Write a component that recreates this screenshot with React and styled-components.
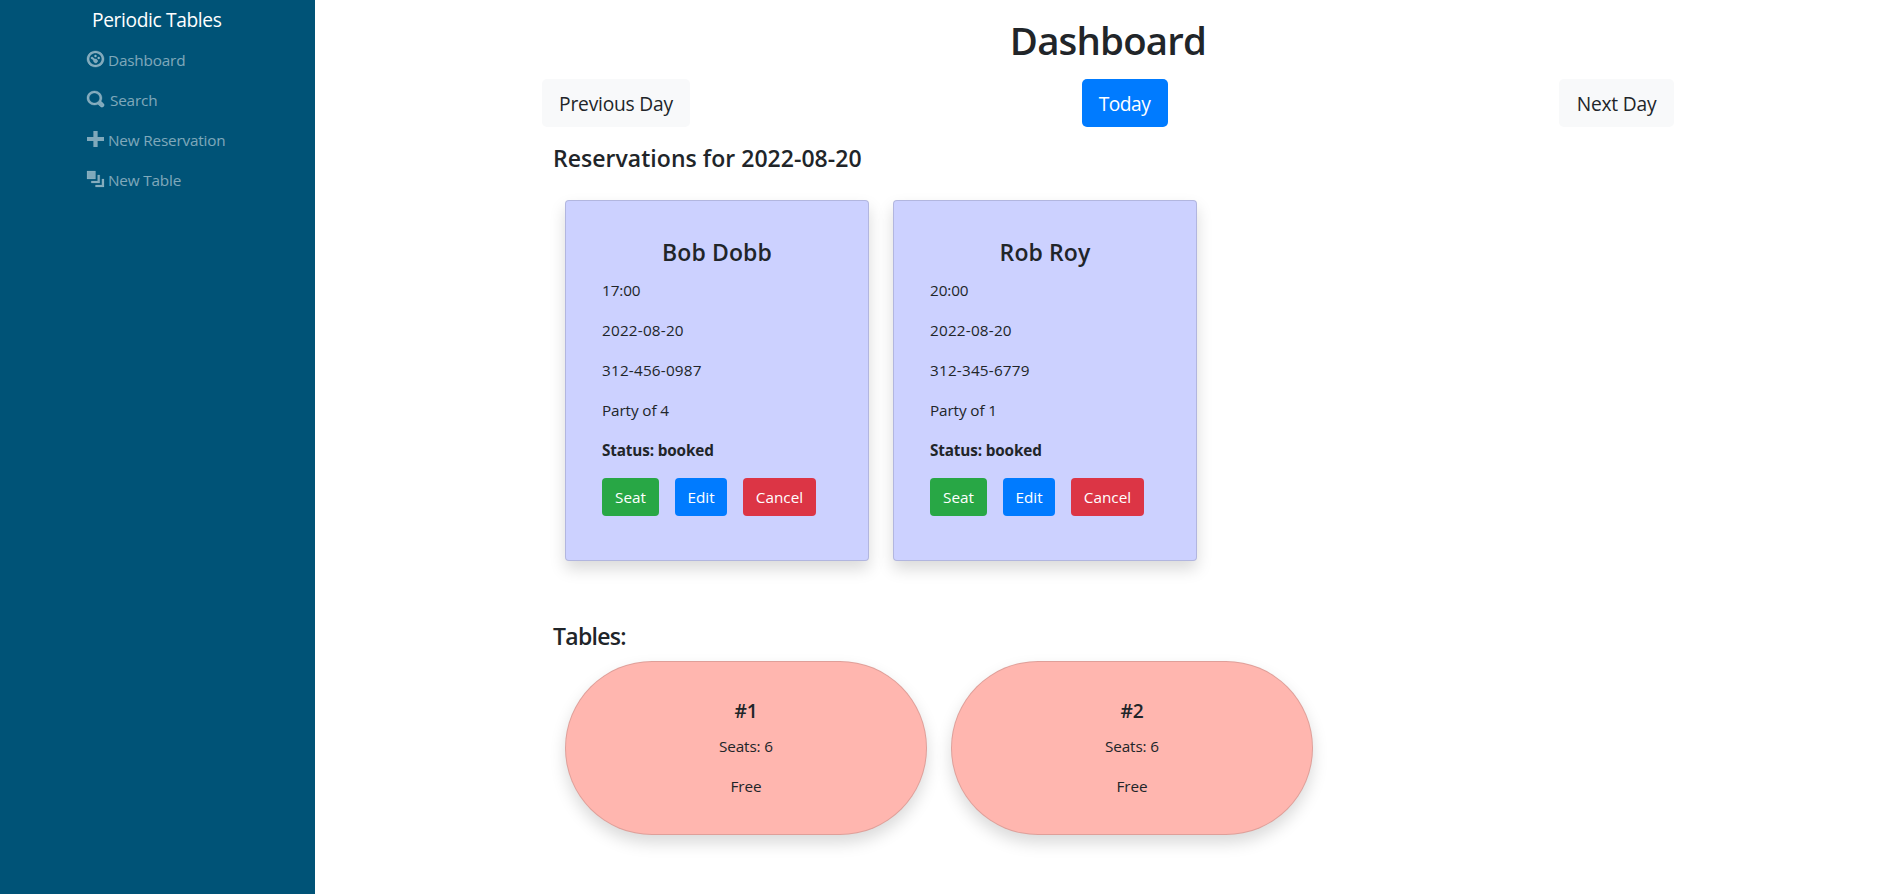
import React from "react";
import styled, { createGlobalStyle } from "styled-components";

const GlobalStyle = createGlobalStyle`
  *, *::before, *::after { box-sizing: border-box; }
  body {
    margin: 0;
    background: #fff;
    color: #212529;
    font-family: "Open Sans", "Noto Sans", sans-serif;
    font-size: 15.3px;
    font-weight: 400;
    line-height: 24px;
  }
  h1, h2, h3, h4, h5, p, ul { margin: 0; padding: 0; }
`;

const Page = styled.div`
  display: flex;
  height: 894px;
  overflow: hidden;
`;

const Sidebar = styled.nav`
  flex: none;
  width: 315px;
  padding: 5px 0 0 87px;
  background: #005377;
`;

const Brand = styled.div`
  padding-left: 5px;
  font-size: 19.2px;
  line-height: 30px;
  letter-spacing: -0.37px;
  color: #fff;
`;

const NavList = styled.ul`
  display: flex;
  flex-direction: column;
  gap: 16px;
  margin-top: 13px;
  list-style: none;
`;

const NavItem = styled.li`
  display: flex;
  align-items: center;
  gap: ${(p) => p.$gap || 4}px;
  height: 24px;
  letter-spacing: -0.18px;
  color: rgba(255, 255, 255, 0.5);
`;

const NavIcon = styled.svg`
  flex: none;
  width: 17px;
  height: 16px;
  margin-top: -2px;
  overflow: visible;
  fill: currentColor;
`;

const Main = styled.main`
  flex: 1;
  padding: 16px 212px 0 227px;
`;

const Title = styled.h1`
  text-align: center;
  font-size: 38.4px;
  font-weight: 600;
  line-height: 48px;
  letter-spacing: -0.8px;
`;

const DayNav = styled.div`
  display: flex;
  justify-content: space-between;
  margin-top: 15px;
`;

const DayButton = styled.button`
  width: ${(p) => p.$width}px;
  height: 48px;
  padding: 2px 0 0;
  border: 0;
  border-radius: 5px;
  background: ${(p) => (p.$primary ? "#007bff" : "#f8f9fa")};
  color: ${(p) => (p.$primary ? "#fff" : "#212529")};
  font-family: inherit;
  font-size: 19.2px;
  font-weight: 400;
  line-height: 30px;
  letter-spacing: ${(p) => (p.$primary ? -0.5 : -0.2)}px;
`;

const SectionTitle = styled.h4`
  margin: ${(p) => p.$top}px 0 0 11px;
  font-size: 23px;
  font-weight: 600;
  line-height: 29px;
  letter-spacing: ${(p) => p.$track}px;
`;

const CardRow = styled.div`
  display: flex;
  gap: 24px;
  margin: ${(p) => p.$top}px 0 0 23px;
`;

const ReservationCard = styled.article`
  width: 304px;
  height: 361px;
  padding: 37px 36px 36px;
  border: 1px solid rgba(0, 0, 0, 0.125);
  border-radius: 4px;
  background: #ccd1ff;
  box-shadow: 0 8px 16px rgba(0, 0, 0, 0.15);
`;

const GuestName = styled.h4`
  margin-bottom: 11px;
  text-align: center;
  font-size: 23px;
  font-weight: 600;
  line-height: 29px;
  letter-spacing: 0.1px;
`;

const Detail = styled.p`
  margin-bottom: 16px;
  font-weight: ${(p) => (p.$strong ? 700 : 400)};
  letter-spacing: ${(p) => (p.$strong ? -0.15 : p.$track || 0)}px;
`;

const Actions = styled.div`
  display: flex;
  gap: 16px;
`;

const actionColors = { seat: "#28a745", edit: "#007bff", cancel: "#dc3545" };

const ActionButton = styled.button`
  width: ${(p) => p.$width}px;
  height: 38px;
  padding: 0;
  border: 0;
  border-radius: 4px;
  background: ${(p) => actionColors[p.$kind]};
  color: #fff;
  font-family: inherit;
  font-size: 15.3px;
  line-height: 24px;
`;

const TableCard = styled.article`
  width: 362px;
  height: 174px;
  padding: 37px 36px 36px;
  border: 1px solid rgba(0, 0, 0, 0.125);
  border-radius: 87px;
  background: #ffb6af;
  box-shadow: 0 8px 16px rgba(0, 0, 0, 0.15);
  text-align: center;
`;

const TableName = styled.h5`
  margin-bottom: 11px;
  font-size: 19.2px;
  font-weight: 600;
  line-height: 24px;
  letter-spacing: -0.2px;
`;

const icons = {
  dashboard:
    "M4 0c-2.2 0-4 1.8-4 4s1.8 4 4 4 4-1.8 4-4-1.8-4-4-4zm0 1c1.66 0 3 1.34 3 3s-1.34 3-3 3-3-1.34-3-3 1.34-3 3-3zm0 1c-.28 0-.5.22-.5.5s.22.5.5.5.5-.22.5-.5-.22-.5-.5-.5zm-1.66 1c-.19 0-.36.11-.44.28-.11.25 0 .55.25.66l.91.4c-.04.1-.06.22-.06.34 0 .5.45 1.32 1 1.32s1-.45 1-1-.45-1-1-1c-.12 0-.24.02-.34.06l-1.13-1.01c-.06-.03-.13-.05-.19-.05zm3.16 0c-.28 0-.5.22-.5.5s.22.5.5.5.5-.22.5-.5-.22-.5-.5-.5z",
  search:
    "M3.5 0c-1.93 0-3.5 1.57-3.5 3.5s1.57 3.5 3.5 3.5c.59 0 1.17-.14 1.66-.41a1 1 0 0 0 .13.13l1 1a1.02 1.02 0 1 0 1.44-1.44l-1-1a1 1 0 0 0-.16-.13c.27-.49.44-1.06.44-1.66 0-1.93-1.55-3.5-3.5-3.5zm0 1c1.39 0 2.5 1.11 2.5 2.5 0 .66-.24 1.27-.66 1.72-.01.01-.02.02-.03.03a1 1 0 0 0-.13.13c-.44.4-1.04.63-1.69.63-1.39 0-2.5-1.11-2.5-2.5s1.11-2.5 2.5-2.5z",
  plus: "M3 0v3h-3v2h3v3h2v-3h3v-2h-3v-3h-2z",
  layers:
    "M0 0v4h4v-4h-4zm5 2v3h-3v1h4v-4h-1zm2 2v3h-3v1h4v-4h-1z",
};

const navItems = [
  { icon: "dashboard", label: "Dashboard", stroke: 0.2 },
  { icon: "search", label: "Search", gap: 6, stroke: 0.2 },
  { icon: "plus", label: "New Reservation", stroke: 0 },
  { icon: "layers", label: "New Table", stroke: 0.1 },
];

const reservations = [
  { name: "Bob Dobb", time: "17:00", date: "2022-08-20", phone: "312-456-0987", people: 4 },
  { name: "Rob Roy", time: "20:00", date: "2022-08-20", phone: "312-345-6779", people: 1 },
];

const tables = [
  { name: "#1", seats: 6, status: "Free" },
  { name: "#2", seats: 6, status: "Free" },
];

export default function App() {
  return (
    <Page>
      <GlobalStyle />
      <Sidebar>
        <Brand>Periodic Tables</Brand>
        <NavList>
          {navItems.map((item) => (
            <NavItem key={item.label} $gap={item.gap}>
              <NavIcon viewBox="0 0 8 8" preserveAspectRatio="none">
                <path d={icons[item.icon]} stroke="currentColor" strokeWidth={item.stroke} />
              </NavIcon>
              {item.label}
            </NavItem>
          ))}
        </NavList>
      </Sidebar>
      <Main>
        <Title>Dashboard</Title>
        <DayNav>
          <DayButton $width={148}>Previous Day</DayButton>
          <DayButton $width={86} $primary>Today</DayButton>
          <DayButton $width={115}>Next Day</DayButton>
        </DayNav>
        <SectionTitle $top={17} $track={0.04}>Reservations for 2022-08-20</SectionTitle>
        <CardRow $top={27}>
          {reservations.map((r) => (
            <ReservationCard key={r.name}>
              <GuestName>{r.name}</GuestName>
              <Detail $track={-0.1}>{r.time}</Detail>
              <Detail $track={0.2}>{r.date}</Detail>
              <Detail $track={0.2}>{r.phone}</Detail>
              <Detail $track={-0.12}>Party of {r.people}</Detail>
              <Detail $strong>Status: booked</Detail>
              <Actions>
                <ActionButton $kind="seat" $width={57}>Seat</ActionButton>
                <ActionButton $kind="edit" $width={52}>Edit</ActionButton>
                <ActionButton $kind="cancel" $width={73}>Cancel</ActionButton>
              </Actions>
            </ReservationCard>
          ))}
        </CardRow>
        <SectionTitle $top={61} $track={-0.7}>Tables:</SectionTitle>
        <CardRow $top={10}>
          {tables.map((t) => (
            <TableCard key={t.name}>
              <TableName>{t.name}</TableName>
              <Detail $track={-0.12}>Seats: {t.seats}</Detail>
              <Detail $track={-0.12}>{t.status}</Detail>
            </TableCard>
          ))}
        </CardRow>
      </Main>
    </Page>
  );
}
